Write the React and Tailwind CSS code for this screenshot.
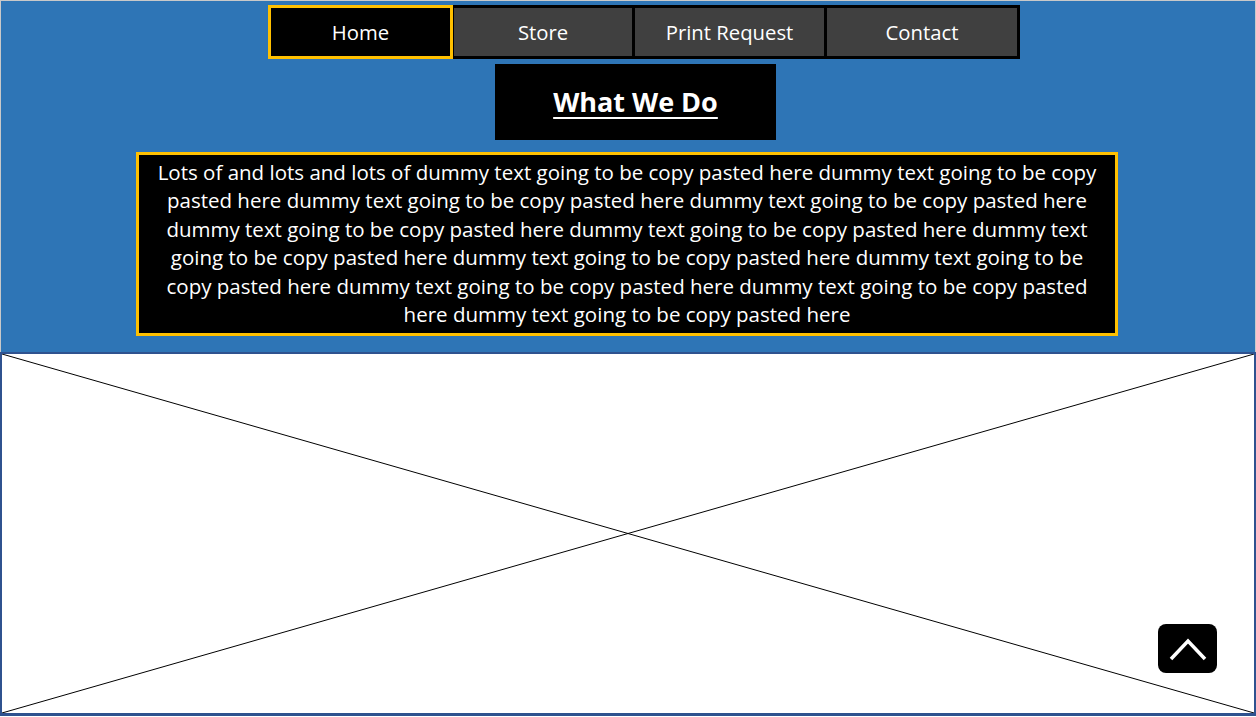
import React from "react";

const lines = [
  "Lots of and lots and lots of dummy text going to be copy pasted here dummy text going to be copy",
  "pasted here dummy text going to be copy pasted here dummy text going to be copy pasted here",
  "dummy text going to be copy pasted here dummy text going to be copy pasted here dummy text",
  "going to be copy pasted here dummy text going to be copy pasted here dummy text going to be",
  "copy pasted here dummy text going to be copy pasted here dummy text going to be copy pasted",
  "here dummy text going to be copy pasted here",
];

export default function App() {
  return (
    <div className="w-[1256px] h-[717px] bg-white overflow-hidden" style={{ fontFamily: '"Open Sans", "Noto Sans", sans-serif' }}>
      <div className="h-[352px] bg-[#2E75B6] border-t border-l border-r border-[#c9c9c9] flex flex-col items-start">
        <nav className="ml-[267px] mt-[4px] w-[752px] h-[54px] bg-black flex items-start text-white text-[20.3px]">
          <a className="w-[185px] h-[54px] border-[3px] border-[#FFC000] bg-black flex items-center justify-center">Home</a>
          <a className="ml-[1px] mt-[3px] w-[178px] h-[48px] bg-[#404040] flex items-center justify-center">Store</a>
          <a className="ml-[3px] mt-[3px] w-[189px] h-[48px] bg-[#404040] flex items-center justify-center">Print Request</a>
          <a className="ml-[3px] mt-[3px] w-[190px] h-[48px] bg-[#404040] flex items-center justify-center">Contact</a>
        </nav>
        <div className="ml-[494px] mt-[5px] w-[281px] h-[76px] bg-black flex items-center justify-center">
          <h1 className="text-white text-[27px] font-bold underline underline-offset-[5px] decoration-2">What We Do</h1>
        </div>
        <div className="ml-[135px] mt-[12px] w-[982px] border-[3px] border-[#FFC000] bg-black pt-[3px] pb-[5px] text-white text-[20.5px] leading-[28.4px] text-center">
          {lines.map((l, i) => (
            <div key={i} className="whitespace-nowrap">{l}</div>
          ))}
        </div>
      </div>
      <div className="relative h-[364px] border-[2px] border-b-[3px] border-[#2F528F] bg-white">
        <svg className="block w-full h-full" viewBox="0 0 100 100" preserveAspectRatio="none">
          <line x1="0" y1="0" x2="100" y2="100" stroke="#000" strokeWidth="1" vectorEffect="non-scaling-stroke" />
          <line x1="0" y1="100" x2="100" y2="0" stroke="#000" strokeWidth="1" vectorEffect="non-scaling-stroke" />
        </svg>
        <button className="absolute left-[1156px] top-[270px] w-[59px] h-[49px] rounded-[8px] bg-black flex items-center justify-center">
          <svg width="40" height="26" viewBox="0 0 40 26">
            <polyline points="3,23 20,5 37,23" fill="none" stroke="#fff" strokeWidth="3.5" />
          </svg>
        </button>
      </div>
    </div>
  );
}
